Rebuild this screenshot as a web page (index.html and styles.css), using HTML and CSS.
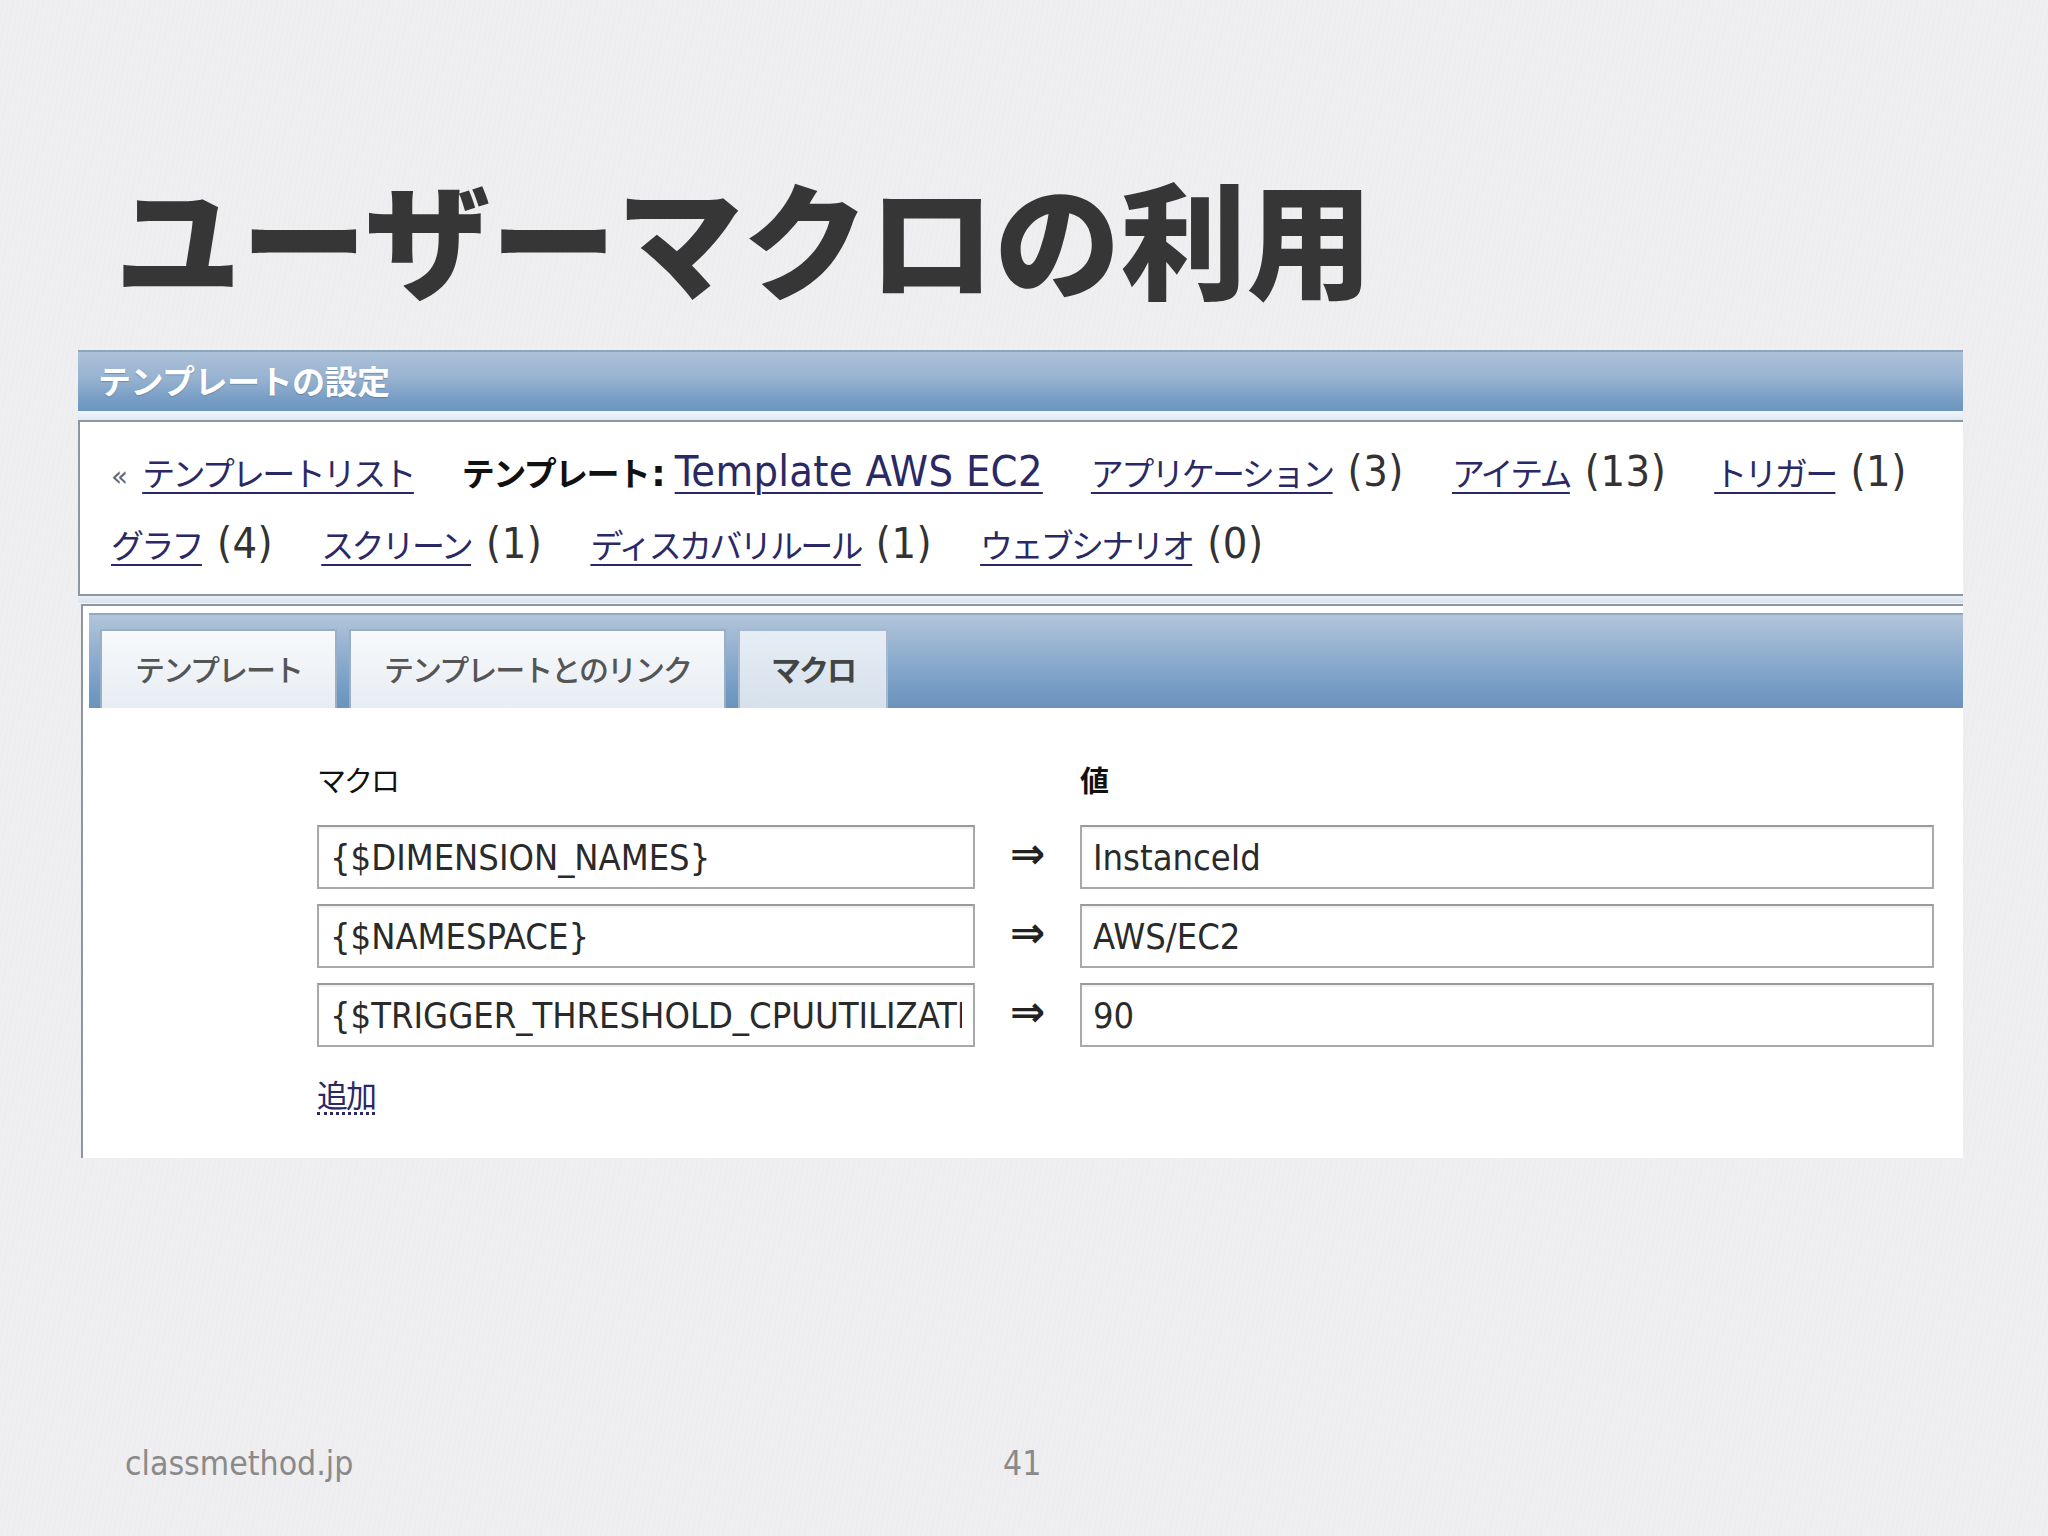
FILE: index.html
```html
<!DOCTYPE html>
<html lang="ja">
<head>
<meta charset="utf-8">
<title>ユーザーマクロの利用</title>
<link rel="stylesheet" href="styles.css">
</head>
<body>
<div class="slide">
  <h1 class="title">ユーザーマクロの利用</h1>

  <div class="panel">
    <div class="panel-head">テンプレートの設定</div>
    <div class="sep"></div>
    <div class="nav-box">
      <div class="nav-row">
        <span class="item"><span class="raquo">«</span><a class="lnk ja">テンプレートリスト</a></span>
        <span class="item"><b class="ja strong">テンプレート</b><b class="colon">:</b><a class="lnk lat">Template AWS EC2</a></span>
        <span class="item"><a class="lnk ja">アプリケーション</a><span class="cnt">(3)</span></span>
        <span class="item"><a class="lnk ja">アイテム</a><span class="cnt">(13)</span></span>
        <span class="item"><a class="lnk ja">トリガー</a><span class="cnt">(1)</span></span>
      </div>
      <div class="nav-row">
        <span class="item"><a class="lnk ja">グラフ</a><span class="cnt">(4)</span></span>
        <span class="item"><a class="lnk ja">スクリーン</a><span class="cnt">(1)</span></span>
        <span class="item"><a class="lnk ja">ディスカバリルール</a><span class="cnt">(1)</span></span>
        <span class="item"><a class="lnk ja">ウェブシナリオ</a><span class="cnt">(0)</span></span>
      </div>
    </div>
    <div class="sep2"></div>

    <div class="tabs-box">
      <div class="tab-bar">
        <div class="tab">テンプレート</div>
        <div class="tab">テンプレートとのリンク</div>
        <div class="tab active">マクロ</div>
      </div>
      <div class="content">
        <div class="macro-grid">
          <div class="lbl">マクロ</div>
          <div></div>
          <div class="lbl bold">値</div>

          <input class="field" type="text" value="{$DIMENSION_NAMES}">
          <span class="arrow">⇒</span>
          <input class="field" type="text" value="InstanceId">

          <input class="field" type="text" value="{$NAMESPACE}">
          <span class="arrow">⇒</span>
          <input class="field" type="text" value="AWS/EC2">

          <input class="field" type="text" value="{$TRIGGER_THRESHOLD_CPUUTILIZATION}">
          <span class="arrow">⇒</span>
          <input class="field" type="text" value="90">
        </div>
        <a class="add">追加</a>
      </div>
    </div>
  </div>

  <div class="footer">
    <span class="site">classmethod.jp</span>
    <span class="page">41</span>
  </div>
</div>
</body>
</html>
```

FILE: styles.css
```css
html, body {
  margin: 0;
  padding: 0;
}

body {
  background: #eeeef0;
}

.slide {
  width: 2048px;
  height: 1536px;
  box-sizing: border-box;
  padding-top: 172px;
  overflow: hidden;
  background: repeating-linear-gradient(100deg, #efeff1 0px, #efeff1 2px, #ececee 3px, #efeff1 5px);
}

.title {
  margin: 0 0 52px 115px;
  font-family: "Noto Sans CJK JP", sans-serif;
  font-weight: 900;
  font-size: 126px;
  line-height: 126px;
  color: #363636;
}

/* ---------- panel ---------- */
.panel {
  margin-left: 78px;
  width: 1885px;
}

.panel-head {
  height: 61px;
  box-sizing: border-box;
  border-top: 2px solid #8ea4bf;
  background: linear-gradient(#adc1d9, #97b2d0 45%, #739bc3 85%, #6e95bd);
  color: #fff;
  font-family: "Noto Sans CJK JP", sans-serif;
  font-weight: 700;
  font-size: 33px;
  line-height: 57px;
  letter-spacing: -0.5px;
  padding-left: 20px;
  text-shadow: 0 1px 1px rgba(40, 70, 110, 0.35);
}

.sep {
  height: 9px;
  background: linear-gradient(#f2f6fa, #dfe7f0);
}

.nav-box {
  height: 176px;
  box-sizing: border-box;
  border: 2px solid #8d97a2;
  border-right: none;
  background: #fff;
  padding: 13px 0 0 31px;
}

.nav-row {
  height: 72px;
  line-height: 72px;
  display: flex;
  align-items: baseline;
  column-gap: 48px;
  white-space: nowrap;
}

.item {
  display: inline-flex;
  align-items: baseline;
}

.ja {
  font-family: "Noto Sans CJK JP", sans-serif;
  font-size: 33px;
  letter-spacing: -2.7px;
}

.lnk {
  color: #2a2966;
  text-decoration: underline;
  text-decoration-thickness: 2px;
  text-underline-offset: 6px;
}

.lat {
  font-family: "DejaVu Sans Condensed", "DejaVu Sans", sans-serif;
  font-stretch: condensed;
  font-size: 43px;
  letter-spacing: 0.3px;
}

.raquo {
  font-family: "DejaVu Sans", sans-serif;
  font-size: 28px;
  color: #666;
  margin-right: 14px;
}

.strong {
  color: #111;
  font-weight: 700;
  letter-spacing: -1.6px;
}

.colon {
  font-family: "DejaVu Sans", sans-serif;
  font-size: 36px;
  color: #111;
  margin: 0 9px 0 2px;
}

.cnt {
  font-family: "DejaVu Sans Condensed", "DejaVu Sans", sans-serif;
  font-stretch: condensed;
  font-size: 43px;
  letter-spacing: 0.5px;
  color: #333;
  margin-left: 15px;
}

.sep2 {
  height: 7px;
  background: linear-gradient(#e9eff5, #d9e2eb);
  border-bottom: 1px solid #f4f7fa;
}

/* ---------- tabs ---------- */
.tabs-box {
  margin-left: 3px;
  border-top: 2px solid #8d97a2;
  border-left: 2px solid #8d97a2;
  background: #fff;
  padding-top: 7px;
}

.tab-bar {
  margin-left: 6px;
  height: 95px;
  box-sizing: border-box;
  padding-left: 11px;
  display: flex;
  align-items: flex-end;
  column-gap: 12px;
  border-top: 2px solid #93a9c2;
  background: linear-gradient(#b2c5db, #a2bad5 20%, #86a8cc 55%, #7199c2 85%, #6d93bb);
}

.tab {
  height: 79px;
  box-sizing: border-box;
  padding: 0 33px;
  border: 2px solid #9aaec5;
  border-bottom: none;
  background: linear-gradient(#f7f9fb, #e8edf3);
  font-family: "Noto Sans CJK JP", sans-serif;
  font-size: 30px;
  font-weight: 500;
  letter-spacing: -2px;
  line-height: 75px;
  color: #555;
}

.tab.active {
  padding: 0 31px;
  background: linear-gradient(#e6edf5, #d6e1ec);
  border-color: #a5b8cd;
  font-weight: 700;
  color: #444;
}

.content {
  height: 450px;
  box-sizing: border-box;
  background: #fff;
  padding: 51px 0 0 234px;
}

.macro-grid {
  display: grid;
  grid-template-columns: 658px 105px 854px;
  row-gap: 15px;
  align-items: center;
}

.lbl {
  font-family: "Noto Sans CJK JP", sans-serif;
  font-size: 29px;
  letter-spacing: -2px;
  line-height: 40px;
  color: #111;
  margin-bottom: 11px;
}

.lbl.bold {
  font-weight: 700;
}

.field {
  display: block;
  width: 100%;
  height: 64px;
  box-sizing: border-box;
  margin: 0;
  padding: 0 11px;
  border: 2px solid #a9a9a9;
  border-top-color: #9a9a9a;
  box-shadow: inset 0 2px 2px rgba(0, 0, 0, 0.06);
  background: #fff;
  font-family: "DejaVu Sans Condensed", "DejaVu Sans", sans-serif;
  font-stretch: condensed;
  font-size: 36px;
  color: #2a2a2a;
  outline: none;
}

.arrow {
  text-align: center;
  font-family: "DejaVu Sans", sans-serif;
  font-size: 42px;
  font-weight: 700;
  color: #222;
  margin-top: -8px;
}

.add {
  display: inline-block;
  margin-top: 29px;
  font-family: "Noto Sans CJK JP", sans-serif;
  font-size: 31px;
  letter-spacing: -2px;
  line-height: 36px;
  color: #2a2966;
  border-bottom: 3px dotted #2a2966;
}

/* ---------- footer ---------- */
.footer {
  margin-top: 286px;
  padding-left: 125px;
  display: flex;
  line-height: 40px;
  font-family: "DejaVu Sans Condensed", "DejaVu Sans", sans-serif;
  font-stretch: condensed;
  font-size: 33.5px;
  color: #8a8a8a;
}

.site {
  width: 878px;
}
```
